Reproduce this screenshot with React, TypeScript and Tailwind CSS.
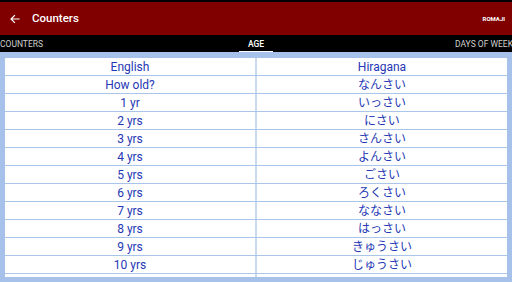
import React from 'react';

const rows: [string, string][] = [
  ['English', 'Hiragana'],
  ['How old?', 'なんさい'],
  ['1 yr', 'いっさい'],
  ['2 yrs', 'にさい'],
  ['3 yrs', 'さんさい'],
  ['4 yrs', 'よんさい'],
  ['5 yrs', 'ごさい'],
  ['6 yrs', 'ろくさい'],
  ['7 yrs', 'ななさい'],
  ['8 yrs', 'はっさい'],
  ['9 yrs', 'きゅうさい'],
  ['10 yrs', 'じゅうさい'],
];

const App: React.FC = () => {
  return (
    <div className="w-[512px] h-[282px] overflow-hidden flex flex-col bg-[#a6c2ea]" style={{ fontFamily: 'Roboto, "Noto Sans CJK JP", sans-serif' }}>
      <div className="h-[2px] bg-black shrink-0" />
      <div className="h-[33px] shrink-0 bg-[#800000] flex items-center text-white">
        <svg width="12" height="12" viewBox="0 0 24 24" className="ml-[9px]" fill="none" stroke="white" strokeWidth="2.4" strokeLinecap="square">
          <path d="M20 12H5M11 5l-7 7 7 7" />
        </svg>
        <span className="ml-[11px] text-[11.5px] font-medium">Counters</span>
        <span className="ml-auto mr-[7px] text-[6px] font-bold">ROMAJI</span>
      </div>
      <div className="h-[17px] shrink-0 bg-black relative text-[8.5px]">
        <span className="absolute left-0 top-[3px] text-[#cfcfcf]">COUNTERS</span>
        <div className="absolute left-[239px] w-[34px] top-0 h-[17px] flex flex-col items-center">
          <span className="mt-[3px] text-white font-medium">AGE</span>
          <div className="mt-auto h-[2px] w-full bg-white" />
        </div>
        <span className="absolute right-[-1px] top-[3px] text-[#cfcfcf] whitespace-nowrap">DAYS OF WEEK</span>
      </div>
      <div className="px-[5px] pt-[6px]">
        <div className="bg-white">
          {rows.map(([en, hi], i) => (
            <div key={i} className="grid grid-cols-[250px_2px_1fr] h-[18px] border-b border-[#a9c5ea] text-[12px] text-[#2537b5]">
              <div className="flex items-center justify-center leading-none">{en}</div>
              <div className="bg-[#c9d9ee]" />
              <div className="flex items-center justify-center leading-none">{hi}</div>
            </div>
          ))}
          <div className="grid grid-cols-[250px_2px_1fr] h-[3px]">
            <div />
            <div className="bg-[#c9d9ee]" />
            <div />
          </div>
        </div>
      </div>
    </div>
  );
};

export default App;
